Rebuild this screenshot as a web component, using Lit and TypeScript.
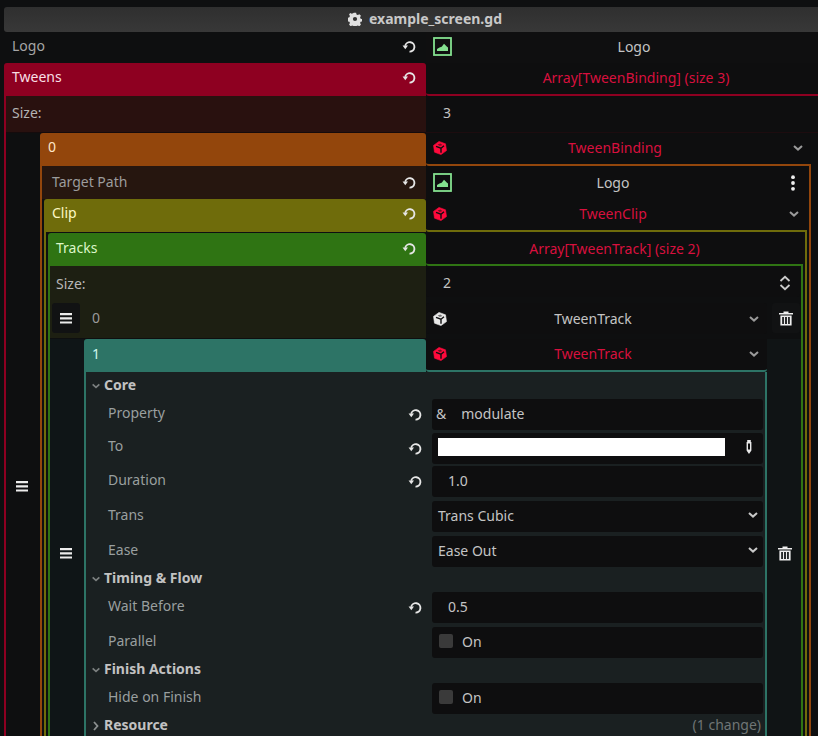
import { LitElement, html, css } from "lit";
import { customElement } from "lit/decorators.js";

const reload = html`<svg class="reload" viewBox="0 0 16 16"><path d="M3.400 7.200A5 5 0 1 1 8 13.400" fill="none" stroke="currentColor" stroke-width="2"/><path d="M.6 7h5.800l-2.900 3.800z" fill="currentColor"/></svg>`;
const chev = html`<svg class="chev" viewBox="0 0 12 12"><path d="M2 4l4 3.600L10 4" fill="none" stroke="currentColor" stroke-width="2"/></svg>`;
const cubeIcon = (cls: string) => html`<svg class="cube ${cls}" viewBox="0 0 14 14"><path d="M6 .4l6.500 2.400 1 6.800L8 13.600 1.500 11.200.5 4.400z" fill="currentColor" stroke="currentColor" stroke-width=".6" stroke-linejoin="round"/><path d="M3 5.300l5 1.900 3-2.500M8 7.200v4.600" fill="none" stroke="#0e0e0f" stroke-width="1.400"/><path d="M4.600 3.600L7.400 2.600l2 1.300-2.600 1z" fill="#0e0e0f" opacity=".55"/></svg>`;
const cube = cubeIcon("");
const image = html`<svg class="image" viewBox="0 0 19 19"><rect x="1" y="1" width="17" height="17" fill="none" stroke="#84e08f" stroke-width="1.800"/><path d="M4 14v-2l2.500-1.600 2.200-.6 2.300-3 3 3 1 .8V14z" fill="#84e08f"/></svg>`;
const burger = html`<svg class="burger" viewBox="0 0 12 11"><path d="M0 0h12v2.200H0zM0 4.200h12v2.200H0zM0 8.400h12v2.200H0z" fill="#ececec"/></svg>`;
const trash = html`<svg class="trash" viewBox="0 0 14 15"><path d="M0 2h14v1.400H0zM4.500.4h5V2h-5z" fill="#eee"/><path d="M1.400 4.400h11.200V14.400H1.400zM3.200 6v7h1.700V6zM6.100 6v7h1.800V6zM9.100 6v7h1.700V6z" fill="#eee" fill-rule="evenodd"/></svg>`;
const updown = html`<svg class="updown" viewBox="0 0 12 16"><path d="M1.500 6L6 1.800 10.500 6M1.500 10L6 14.200 10.500 10" fill="none" stroke="#ccc" stroke-width="1.800"/></svg>`;
const dots = html`<svg class="dots" viewBox="0 0 4 16"><circle cx="2" cy="2.200" r="1.900" fill="#eee"/><circle cx="2" cy="8" r="1.900" fill="#eee"/><circle cx="2" cy="13.800" r="1.900" fill="#eee"/></svg>`;
const gear = html`<svg class="gear" viewBox="0 0 16 16"><path fill="#e0e0e0" fill-rule="evenodd" d="M6.700.8h2.600l.4 2 1.500.7 1.800-1 1.800 1.900-1 1.700.6 1.500 2 .5v2.600l-2 .5-.6 1.500 1 1.700-1.800 1.900-1.800-1-1.500.6-.4 2.100H6.700l-.4-2.100-1.500-.6-1.800 1-1.800-1.900 1-1.700-.6-1.500-2-.5V6.600l2-.5.6-1.500-1-1.700L2.500 1l1.800 1 1.500-.7zM8 5.600a2.400 2.400 0 1 0 0 4.800a2.400 2.400 0 0 0 0-4.800z"/></svg>`;
const picker = html`<svg class="picker" viewBox="0 0 6 14"><path d="M1.200 0h3.600v2h.6v8.500L3 14 .6 10.500V2h.6zM2 3.500v6h2v-6z" fill="#e8e8e8" fill-rule="evenodd"/></svg>`;

@customElement("app-root")
export class AppRoot extends LitElement {
  static styles = css`
    :host { display: block; font-family: "Noto Sans", sans-serif; font-size: 14px; color: #c4c4c4; }
    * { box-sizing: border-box; }
    .page { width: 818px; height: 736px; overflow: hidden; background: #0e0f10; padding-top: 7px; display: flex; flex-direction: column; }
    .title { flex: none; height: 25px; margin-left: 4px; background: linear-gradient(#2f2f2f, #383838); border-radius: 3px 0 0 3px; display: flex; align-items: center; justify-content: center; gap: 7px; font-weight: 700; color: #c8c8c8; padding-left: 28px; padding-bottom: 2px; }
    .gear { width: 14px; height: 14px; }
    .row { display: flex; flex: none; height: 33px; }
    .label { flex: none; width: var(--lw); display: flex; align-items: center; justify-content: space-between; padding: 0 9px 2px 8px; line-height: 20px; white-space: nowrap; }
    .val { flex: 1; min-width: 0; display: flex; align-items: center; padding-left: 7px; padding-right: 7px; background: #0e0e0f; white-space: nowrap; }
    .reload { width: 15px; height: 15px; flex: none; color: #e6e6e6; }
    .chev { width: 12px; height: 12px; margin-left: 9px; flex: none; color: #9a9a9a; }
    .cube { width: 14px; height: 14px; flex: none; color: #ff0a3c; }
    .cube.white { color: #e8e8e8; }
    .image { width: 19px; height: 19px; flex: none; }
    .name { flex: 1; text-align: center; }
    .red { color: #d8103e; }
    .dots { width: 4px; height: 16px; margin-left: 17px; margin-right: 7px; flex: none; }
    .burger { width: 12px; height: 11px; }
    .trash { width: 14px; height: 15px; }
    .updown { width: 12px; height: 16px; flex: none; }
    .picker { width: 6px; height: 14px; flex: none; margin: 0 11px 0 21px; }

    .top { height: 31px; margin-left: 4px; --lw: 422px; }
    .top .label { color: #a6a6a6; }
    .top .label > span { margin-bottom: 2px; }
    .top .val { padding-right: 2px; background: #0f0f10; padding-bottom: 2px; }

    .sec { --c: #888; display: flex; flex-direction: column; flex: none; }
    .sec > .head > .label { background: var(--c); border-radius: 3px 3px 0 0; color: var(--t); }
    .sec > .head > .label > span { margin-bottom: var(--up, 0); }
    .sec > .head > .label > .reload { margin-bottom: var(--rup, 0); }
    .sec > .head > .val { border-bottom: 2px solid var(--c); border-radius: 0 0 0 3px; padding-bottom: var(--vp, 0); }
    .sec > .bd { border-left: 2px solid var(--c); border-right: 2px solid var(--c); display: flex; flex-direction: column; flex: 1; }

    .crimson { --c: #8e0021; --t: #f8dfe4; --lw: 422px; --up: 4px; --rup: 2px; --vp: 2px; margin-left: 4px; }
    .crimson > .bd { --lw: 420px; border-right: none; }
    .crimson .arr { text-align: center; padding-left: 28px; }
    .size0 { height: 37px; }
    .size0 .label { background: #29110f; padding-left: 6px; padding-bottom: 3px; color: #b4b4b4; border-bottom: 1px solid #150b0c; }
    .size0 .val { padding-left: 17px; border-bottom: 1px solid #1d0c0f; padding-bottom: 3px; }

    .outer { display: flex; min-height: 708px; flex: none; }
    .hcol { width: 34px; flex: none; display: flex; align-items: center; justify-content: center; background: #0e0f10; padding-right: 2px; padding-bottom: 2px; }
    .orange { --c: #93460c; --t: #ffe6c8; --lw: 386px; --up: 4px; --rup: 2px; --vp: 2px; flex: none; width: 771px; }
    .orange > .bd { --lw: 384px; }
    .target .label { background: #26160f; color: #9c9c9c; padding-left: 10px; }
    .target .label .reload { margin-top: 2px; }
    .olive { --c: #6f6c0b; --t: #fdf9c4; --lw: 382px; --up: 4px; --rup: 2px; --vp: 2px; margin: 0 2px; }
    .olive > .bd { --lw: 380px; padding-top: 1px; }
    .green { --c: #2f7413; --t: #dcf6c8; --lw: 378px; --up: 2px; --rup: 0px; --vp: 0px; margin: 0 2px; }
    .green > .bd { --lw: 376px; }
    .size1 { height: 34px; }
    .size1 .label { background: #1d1f12; padding: 1px 9px 0 6px; color: #b8b8b8; }
    .size1 .val { padding-left: 17px; padding-right: 9px; justify-content: space-between; margin: 2px 1px 3px 0; border-radius: 3px; }

    .gap { height: 3px; width: var(--lw); background: #1d1f12; flex: none; }
    .item0 { height: 35px; display: flex; flex: none; margin-bottom: 1px; }
    .item0 .lab { flex: none; width: var(--lw); background: #1d1f12; display: flex; padding-left: 2px; position: relative; }
    .hbox { width: 28px; height: 30px; background: #111213; border-radius: 3px; display: flex; align-items: center; justify-content: center; flex: none; padding-right: 1px; }
    .item0 .num { padding-left: 12px; line-height: 30px; color: #9a9a9a; }
    .item0 .val { flex: none; width: 341px; height: 31px; border-radius: 3px; }
    .tbox { flex: none; width: 28px; height: 30px; margin-left: 5px; background: #111213; border-radius: 3px; display: flex; align-items: center; justify-content: center; }

    .inner { display: flex; flex: none; min-height: 404px; }
    .inner .hc { flex: none; width: 34px; display: flex; align-items: center; justify-content: center; background: #0f1517; padding-right: 2px; }
    .teal { --c: #2d7466; --t: #cdf7ee; --lw: 342px; --up: 2px; --rup: 0px; --vp: 2px; flex: none; width: 683px; }
    .teal > .bd { --lw: 346px; background: #1a2021; padding-bottom: 30px; }
    .inner .tc { flex: none; width: 34px; display: flex; align-items: center; justify-content: center; background: #101415; padding-left: 1px; }
    .teal .head .val { border-radius: 0 0 3px 3px; }

    .cat { flex: none; display: flex; align-items: center; color: #c2c2c2; font-weight: 700; padding-left: 5px; gap: 3px; line-height: 20px; }
    .cat .chev { margin: 0; width: 10px; height: 10px; color: #7c8080; margin-top: 2px; }
    .cat svg.right { width: 10px; height: 10px; color: #8b8f8f; margin-top: 2px; }
    .c1 { height: 25px; }
    .c2 { height: 23px; padding-bottom: 2px; }
    .c3 { height: 23px; padding-bottom: 2px; }
    .c4 { height: 24px; justify-content: flex-start; padding-bottom: 2px; }
    .hint { margin-left: auto; font-weight: 400; color: #6f7575; padding-right: 4px; }

    .prop { display: flex; flex: none; height: 31px; }
    .prop .label { color: #999f9f; padding: 0 9px 3px 22px; }
    .prop.m3 .label > span { margin-bottom: 2px; }
    .prop .label .reload { margin-top: 3px; }
    .prop .v { flex: none; width: 331px; background: #0e0e0f; border-radius: 3px; display: flex; align-items: center; white-space: nowrap; padding-bottom: 3px; }
    .m2 { margin-top: 2px; } .m3 { margin-top: 3px; } .m4 { margin-top: 4px; }
    .numv { padding-left: 16px; }
    .strv { padding-left: 4px; }
    .strv span { margin-left: 15px; }
    .drop { padding-left: 6px; justify-content: space-between; padding-right: 4px; }
    .drop .chev { color: #c8c8c8; }
    .swatch { margin-left: 6px; width: 287px; height: 18px; background: #fff; flex: none; }
    .check { padding-left: 7px; }
    .box { width: 14px; height: 14px; background: #3a3a3a; border-radius: 2px; flex: none; margin-right: 9px; }
  `;

  private prop(name: string, mt: string, hasReload: boolean, value: unknown) {
    return html`<div class="prop ${mt}"><div class="label"><span>${name}</span>${hasReload ? reload : ""}</div>${value}</div>`;
  }

  private cat(name: string, cls: string) {
    return html`<div class="cat ${cls}">${chev}<span>${name}</span></div>`;
  }

  render() {
    return html`<div class="page">
      <div class="title">${gear}<span>example_screen.gd</span></div>
      <div class="row top">
        <div class="label"><span>Logo</span>${reload}</div>
        <div class="val">${image}<span class="name">Logo</span></div>
      </div>
      <section class="sec crimson">
        <div class="row head">
          <div class="label"><span>Tweens</span>${reload}</div>
          <div class="val"><span class="name arr red">Array[TweenBinding] (size 3)</span></div>
        </div>
        <div class="bd">
          <div class="row size0"><div class="label">Size:</div><div class="val">3</div></div>
          <div class="outer">
            <div class="hcol">${burger}</div>
            <section class="sec orange">
              <div class="row head">
                <div class="label"><span>0</span></div>
                <div class="val">${cube}<span class="name red">TweenBinding</span>${chev}</div>
              </div>
              <div class="bd">
                <div class="row target">
                  <div class="label"><span>Target Path</span>${reload}</div>
                  <div class="val">${image}<span class="name">Logo</span>${dots}</div>
                </div>
                <section class="sec olive">
                  <div class="row head">
                    <div class="label"><span>Clip</span>${reload}</div>
                    <div class="val">${cube}<span class="name red">TweenClip</span>${chev}</div>
                  </div>
                  <div class="bd">
                    <section class="sec green">
                      <div class="row head">
                        <div class="label"><span>Tracks</span>${reload}</div>
                        <div class="val"><span class="name red">Array[TweenTrack] (size 2)</span></div>
                      </div>
                      <div class="bd">
                        <div class="row size1"><div class="label">Size:</div><div class="val"><span>2</span>${updown}</div></div>
                        <div class="gap"></div>
                        <div class="item0">
                          <div class="lab"><div class="hbox">${burger}</div><span class="num">0</span></div>
                          <div class="val">${cubeIcon("white")}<span class="name">TweenTrack</span>${chev}</div>
                          <div class="tbox">${trash}</div>
                        </div>
                        <div class="inner">
                          <div class="hc">${burger}</div>
                          <section class="sec teal">
                            <div class="row head">
                              <div class="label"><span>1</span></div>
                              <div class="val">${cube}<span class="name red">TweenTrack</span>${chev}</div>
                            </div>
                            <div class="bd">
                              ${this.cat("Core", "c1")}
                              ${this.prop("Property", "m2", true, html`<div class="v strv">&amp;<span>modulate</span></div>`)}
                              ${this.prop("To", "m3", true, html`<div class="v"><div class="swatch"></div>${picker}</div>`)}
                              ${this.prop("Duration", "m2", true, html`<div class="v numv">1.0</div>`)}
                              ${this.prop("Trans", "m4", false, html`<div class="v drop"><span>Trans Cubic</span>${chev}</div>`)}
                              ${this.prop("Ease", "m4", false, html`<div class="v drop"><span>Ease Out</span>${chev}</div>`)}
                              ${this.cat("Timing & Flow", "c2")}
                              ${this.prop("Wait Before", "m2", true, html`<div class="v numv">0.5</div>`)}
                              ${this.prop("Parallel", "m4", false, html`<div class="v check"><div class="box"></div>On</div>`)}
                              ${this.cat("Finish Actions", "c3")}
                              ${this.prop("Hide on Finish", "m2", false, html`<div class="v check"><div class="box"></div>On</div>`)}
                              <div class="cat c4"><svg class="right" viewBox="0 0 10 10"><path d="M3 1l3.500 4L3 9" fill="none" stroke="currentColor" stroke-width="1.800"/></svg><span>Resource</span><span class="hint">(1 change)</span></div>
                            </div>
                          </section>
                          <div class="tc">${trash}</div>
                        </div>
                      </div>
                    </section>
                  </div>
                </section>
              </div>
            </section>
          </div>
        </div>
      </section>
    </div>`;
  }
}
